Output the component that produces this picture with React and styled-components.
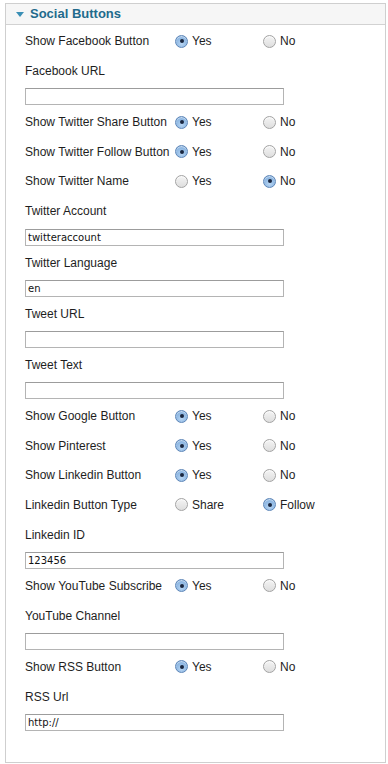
import React from "react";
import styled, { createGlobalStyle } from "styled-components";

const GlobalStyle = createGlobalStyle`
  html, body { margin: 0; padding: 0; background: #ffffff; }
  * { box-sizing: border-box; }
`;

const Panel = styled.div`
  margin: 3px 0 0 5px;
  width: 381px;
  height: 760px;
  border: 1px solid #cfcfcf;
  background: #ffffff;
  font-family: "Liberation Sans", Arial, sans-serif;
  display: flex;
  flex-direction: column;
`;

const Header = styled.div`
  height: 21px;
  flex: none;
  background: #f6f6f6;
  border-bottom: 1px solid #d2d2d2;
  display: flex;
  align-items: center;
  padding-left: 10px;
  gap: 6px;
`;

const Triangle = styled.span`
  width: 0;
  height: 0;
  border-left: 4px solid transparent;
  border-right: 4px solid transparent;
  border-top: 5px solid #3a8fb5;
  margin-top: 0;
`;

const Title = styled.h3`
  margin: 0 0 1px 0;
  font-size: 13px;
  font-weight: bold;
  color: #226a8c;
  line-height: 1;
`;

const Body = styled.div`
  padding: 1.5px 0 0 19px;
  display: flex;
  flex-direction: column;
`;

const Row = styled.div`
  display: flex;
  align-items: center;
  height: ${(p) => (p.$kind === "label" ? "30.5px" : p.$kind === "input" ? "20.8px" : "29.6px")};
`;

const Label = styled.span`
  width: 150px;
  flex: none;
  font-size: 12px;
  color: #1e1e1e;
  white-space: nowrap;
`;

const Option = styled.label`
  width: 88px;
  flex: none;
  display: flex;
  align-items: center;
  gap: 4px;
  font-size: 12px;
  color: #1e1e1e;
`;

const Radio = styled.span`
  width: 13px;
  height: 13px;
  border-radius: 50%;
  flex: none;
  display: flex;
  align-items: center;
  justify-content: center;
  border: 1px solid ${(p) => (p.$checked ? "#5d86b8" : "#a3a3a3")};
  background: ${(p) =>
    p.$checked
      ? "radial-gradient(circle at 50% 70%, #b9d6f3 0%, #8cb6e2 60%, #6f9fd3 100%)"
      : "linear-gradient(#f4f4f4, #dedede)"};
  box-shadow: inset 0 1px 1px ${(p) => (p.$checked ? "rgba(255,255,255,0.6)" : "rgba(255,255,255,0.8)")};
`;

const Dot = styled.span`
  width: 4px;
  height: 4px;
  border-radius: 50%;
  background: #1a2740;
`;

const TextInput = styled.input`
  width: 259px;
  height: 17px;
  margin: 0;
  padding: 0 2px;
  border: 1px solid #b4b4b4;
  border-top-color: #9c9c9c;
  background: #fff;
  font-family: "DejaVu Sans", "Liberation Sans", sans-serif;
  font-size: 10px;
  color: #111;
  outline: none;
`;

function RadioRow({ label, options, selected }) {
  return (
    <Row>
      <Label>{label}</Label>
      {options.map((o, i) => (
        <Option key={o}>
          <Radio $checked={i === selected}>{i === selected && <Dot />}</Radio>
          {o}
        </Option>
      ))}
    </Row>
  );
}

function FieldRows({ label, value }) {
  return (
    <>
      <Row $kind="label">
        <Label>{label}</Label>
      </Row>
      <Row $kind="input">
        <TextInput defaultValue={value} />
      </Row>
    </>
  );
}

const YN = ["Yes", "No"];

const items = [
  { t: "r", label: "Show Facebook Button", sel: 0 },
  { t: "f", label: "Facebook URL", value: "" },
  { t: "r", label: "Show Twitter Share Button", sel: 0 },
  { t: "r", label: "Show Twitter Follow Button", sel: 0 },
  { t: "r", label: "Show Twitter Name", sel: 1 },
  { t: "f", label: "Twitter Account", value: "twitteraccount" },
  { t: "f", label: "Twitter Language", value: "en" },
  { t: "f", label: "Tweet URL", value: "" },
  { t: "f", label: "Tweet Text", value: "" },
  { t: "r", label: "Show Google Button", sel: 0 },
  { t: "r", label: "Show Pinterest", sel: 0 },
  { t: "r", label: "Show Linkedin Button", sel: 0 },
  { t: "r", label: "Linkedin Button Type", sel: 1, options: ["Share", "Follow"] },
  { t: "f", label: "Linkedin ID", value: "123456" },
  { t: "r", label: "Show YouTube Subscribe", sel: 0 },
  { t: "f", label: "YouTube Channel", value: "" },
  { t: "r", label: "Show RSS Button", sel: 0 },
  { t: "f", label: "RSS Url", value: "http://" },
];

export default function App() {
  return (
    <>
      <GlobalStyle />
      <Panel>
        <Header>
          <Triangle />
          <Title>Social Buttons</Title>
        </Header>
        <Body>
          {items.map((it) =>
            it.t === "r" ? (
              <RadioRow key={it.label} label={it.label} options={it.options || YN} selected={it.sel} />
            ) : (
              <FieldRows key={it.label} label={it.label} value={it.value} />
            )
          )}
        </Body>
      </Panel>
    </>
  );
}
